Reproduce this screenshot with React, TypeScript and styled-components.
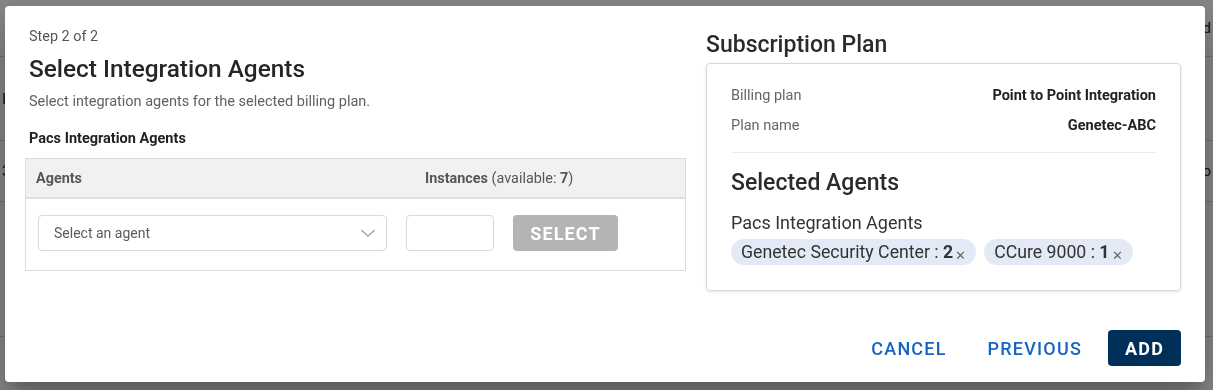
import React from "react";
import styled, { createGlobalStyle } from "styled-components";

const Global = createGlobalStyle`
  html, body { margin: 0; padding: 0; }
  body { font-family: Roboto, "Liberation Sans", Arial, sans-serif; background: #fff; overflow: hidden; }
  * { box-sizing: border-box; }
`;

const Page = styled.div`
  width: 1213px;
  height: 390px;
  display: flex;
  flex-direction: column;
  background: #fff;
`;

const PageRow = styled.div<{ $h: number }>`
  height: ${(p) => p.$h}px;
  border-bottom: 1px solid #d6d6d6;
  display: flex;
  align-items: center;
  justify-content: space-between;
  padding: 0 2px;
  color: #222;
  font-size: 15px;
`;

const Backdrop = styled.div`
  position: fixed;
  inset: 0;
  background: rgba(0, 0, 0, 0.47);
  display: flex;
  align-items: flex-start;
  padding: 6px 0 0 5px;
`;

const Dialog = styled.div`
  width: 1200px;
  height: 376px;
  background: #fff;
  border-radius: 4px;
  box-shadow: 0 11px 15px -7px rgba(0,0,0,0.2), 0 24px 38px 3px rgba(0,0,0,0.14), 0 9px 46px 8px rgba(0,0,0,0.12);
  display: flex;
  flex-direction: column;
  padding: 0 24px 16px 20px;
`;

const Body = styled.div`
  flex: 1;
  display: grid;
  grid-template-columns: 661px 475px;
  column-gap: 20px;
`;

const LeftCol = styled.div`
  padding-top: 23px;
  display: flex;
  flex-direction: column;
`;

const Step = styled.div`
  font-size: 14.4px;
  color: #555;
  line-height: 16px;
  padding-left: 4px;
`;

const Title = styled.h2`
  margin: 9px 0 0;
  font-size: 24.4px;
  font-weight: 500;
  color: #262626;
  line-height: 30px;
  padding-left: 4px;
`;

const Desc = styled.p`
  margin: 10px 0 0;
  font-size: 14.5px;
  color: #616161;
  line-height: 16px;
  padding-left: 4px;
`;

const SectionLabel = styled.div`
  margin-top: 21px;
  font-size: 14.5px;
  font-weight: 700;
  color: #222;
  line-height: 16px;
  padding-left: 4px;
`;

const Table = styled.div`
  margin-top: 11px;
  border: 1px solid #dcdcdc;
  height: 113px;
`;

const THead = styled.div`
  height: 40px;
  background: #f1f1f1;
  border-bottom: 2px solid #dedede;
  display: grid;
  grid-template-columns: 389px 1fr;
  align-items: center;
  font-size: 14.4px;
  font-weight: 700;
  color: #575757;
  padding-left: 10px;
`;

const Muted = styled.span`
  font-weight: 400;
`;

const Strong = styled.b`
  font-weight: 700;
`;

const TRow = styled.div`
  display: flex;
  align-items: center;
  gap: 19px;
  padding: 16px 0 0 12px;
`;

const SelectBox = styled.div`
  width: 349px;
  height: 36px;
  border: 1px solid #d9d9d9;
  border-radius: 4px;
  display: flex;
  align-items: center;
  justify-content: space-between;
  padding: 0 9px 0 15px;
  font-size: 14px;
  color: #5b5b5b;
`;

const NumInput = styled.div`
  width: 88px;
  height: 36px;
  border: 1px solid #d9d9d9;
  border-radius: 4px;
`;

const SelectBtn = styled.button`
  width: 105px;
  height: 36px;
  border: none;
  border-radius: 4px;
  background: #b4b4b4;
  color: #fff;
  font-family: Roboto, "Liberation Sans", sans-serif;
  font-size: 18px;
  font-weight: 700;
  letter-spacing: 1.1px;
  padding: 0;
`;

const RightCol = styled.div`
  padding-top: 26px;
  display: flex;
  flex-direction: column;
`;

const PlanTitle = styled.h3`
  margin: 0;
  font-size: 23px;
  font-weight: 500;
  color: #2b2b2b;
  line-height: 26px;
`;

const Card = styled.div`
  margin-top: 5px;
  height: 228px;
  border: 1px solid #d9d9d9;
  border-radius: 4px;
  box-shadow: 0 1px 3px rgba(0, 0, 0, 0.12);
  padding: 24px 24px 0 24px;
  display: flex;
  flex-direction: column;
`;

const InfoRow = styled.div`
  display: flex;
  justify-content: space-between;
  font-size: 14.5px;
  line-height: 16px;
  margin-bottom: 14px;
`;

const InfoLabel = styled.span`
  color: #666;
`;

const InfoValue = styled.span`
  color: #222;
  font-weight: 700;
`;

const Divider = styled.hr`
  margin: 4px 0 0;
  border: none;
  border-top: 1px solid #ececec;
`;

const SubTitle = styled.div`
  margin-top: 17px;
  font-size: 23px;
  font-weight: 500;
  color: #2b2b2b;
  line-height: 26px;
`;

const GroupName = styled.div`
  margin-top: 17px;
  font-size: 18px;
  color: #333;
  line-height: 20px;
`;

const Chips = styled.div`
  margin-top: 6px;
  display: flex;
  gap: 8px;
`;

const Chip = styled.div`
  height: 26px;
  border-radius: 13px;
  background: #e3eaf5;
  display: flex;
  align-items: center;
  padding: 0 10px 0 10px;
  font-size: 17.7px;
  color: #333;
`;

const ChipX = styled.span`
  font-size: 13px;
  color: #666;
  margin-left: 2px;
  margin-top: 6px;
`;

const Footer = styled.div`
  display: flex;
  justify-content: flex-end;
  align-items: center;
`;

const TextBtn = styled.button`
  background: none;
  border: none;
  color: #1565c0;
  font-family: Roboto, "Liberation Sans", sans-serif;
  font-size: 18px;
  font-weight: 500;
  letter-spacing: 1.2px;
  height: 36px;
  padding: 0 17px;
  margin-right: 9px;
`;

const CancelBtn = styled(TextBtn)`
  margin-right: 7px;
`;

const PrimaryBtn = styled.button`
  background: #002f5a;
  color: #fff;
  border: none;
  border-radius: 4px;
  font-family: Roboto, "Liberation Sans", sans-serif;
  font-size: 18px;
  font-weight: 700;
  letter-spacing: 1.2px;
  height: 36px;
  width: 73px;
  padding: 0;
`;

const Chevron = () => (
  <svg width="18" height="18" viewBox="0 0 18 18" fill="none">
    <path d="M2.5 6l6.5 6.2L15.5 6" stroke="#9a9a9a" strokeWidth="1.2" />
  </svg>
);

export default function App() {
  return (
    <>
      <Global />
      <Page>
        <PageRow $h={57}><span /><span>d</span></PageRow>
        <PageRow $h={84}><span>I</span><span /></PageRow>
        <PageRow $h={61}><span>3</span><span>o</span></PageRow>
        <PageRow $h={135}><span /><span /></PageRow>
      </Page>
      <Backdrop>
        <Dialog>
          <Body>
            <LeftCol>
              <Step>Step 2 of 2</Step>
              <Title>Select Integration Agents</Title>
              <Desc>Select integration agents for the selected billing plan.</Desc>
              <SectionLabel>Pacs Integration Agents</SectionLabel>
              <Table>
                <THead>
                  <span>Agents</span>
                  <span>
                    Instances <Muted>(available: </Muted>
                    <Strong>7</Strong>
                    <Muted>)</Muted>
                  </span>
                </THead>
                <TRow>
                  <SelectBox>
                    <span>Select an agent</span>
                    <Chevron />
                  </SelectBox>
                  <NumInput />
                  <SelectBtn>SELECT</SelectBtn>
                </TRow>
              </Table>
            </LeftCol>
            <RightCol>
              <PlanTitle>Subscription Plan</PlanTitle>
              <Card>
                <InfoRow>
                  <InfoLabel>Billing plan</InfoLabel>
                  <InfoValue>Point to Point Integration</InfoValue>
                </InfoRow>
                <InfoRow>
                  <InfoLabel>Plan name</InfoLabel>
                  <InfoValue>Genetec-ABC</InfoValue>
                </InfoRow>
                <Divider />
                <SubTitle>Selected Agents</SubTitle>
                <GroupName>Pacs Integration Agents</GroupName>
                <Chips>
                  <Chip>
                    Genetec Security Center :&nbsp;<Strong>2</Strong>
                    <ChipX>✕</ChipX>
                  </Chip>
                  <Chip>
                    CCure 9000 :&nbsp;<Strong>1</Strong>
                    <ChipX>✕</ChipX>
                  </Chip>
                </Chips>
              </Card>
            </RightCol>
          </Body>
          <Footer>
            <CancelBtn>CANCEL</CancelBtn>
            <TextBtn>PREVIOUS</TextBtn>
            <PrimaryBtn>ADD</PrimaryBtn>
          </Footer>
        </Dialog>
      </Backdrop>
    </>
  );
}
